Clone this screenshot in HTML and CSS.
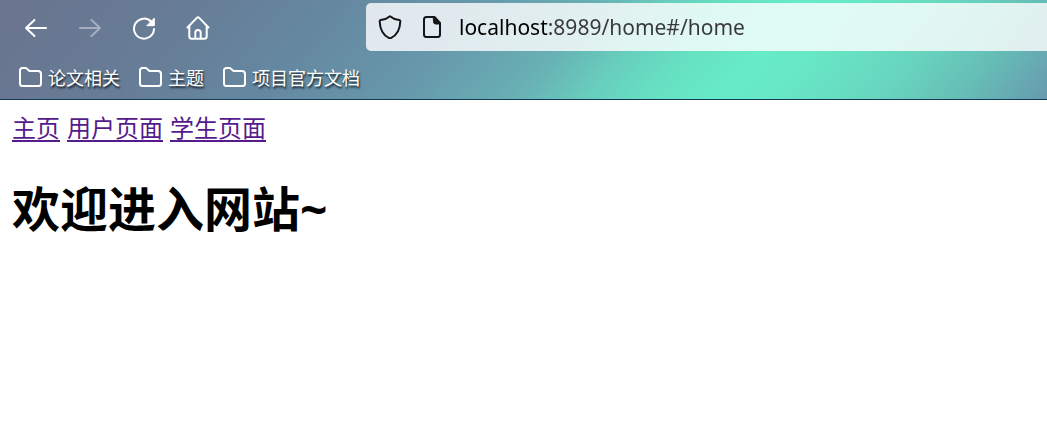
FILE: index.html
```html
<!DOCTYPE html>
<html lang="zh-CN">
<head>
<meta charset="utf-8">
<title>主页</title>
<link rel="stylesheet" href="styles.css">
</head>
<body>
<header class="chrome">
  <div class="toolbar">
    <div class="nav-buttons">
      <button class="nav-button" type="button" aria-label="后退">
        <svg class="icon" viewBox="0 0 24 24"><path d="M22 12H2M10.500 4 2 12l8.500 8"/></svg>
      </button>
      <button class="nav-button" type="button" aria-label="前进" disabled>
        <svg class="icon" viewBox="0 0 24 24"><path d="M2 12H22M13.500 4 22 12l-8.500 8"/></svg>
      </button>
      <button class="nav-button" type="button" aria-label="刷新">
        <svg class="icon" viewBox="0 0 24 24"><path d="M22 13A10 10 0 1 1 19.500 6"/><path class="solid" d="M22.300 2.500v7.200h-7.200z"/></svg>
      </button>
      <button class="nav-button" type="button" aria-label="主页">
        <svg class="icon" viewBox="0 0 24 24"><path d="M1.500 11.500 10.800 1.900q1.200-1.200 2.400 0l9.300 9.600M3.300 10v10.200q0 2.500 2.500 2.500h12.400q2.500 0 2.500-2.500V10M9.300 22.700v-6q0-2.700 2.700-2.700t2.700 2.700v6"/></svg>
      </button>
    </div>
    <div class="address">
      <svg class="icon" viewBox="0 0 24 24" aria-hidden="true"><path d="M12 1.200C9 3.800 5.500 4.700 2.700 5.100Q1.600 5.300 1.700 6.500C2 14.500 5 20 10.800 22.900q1.200.6 2.400 0C19 20 22 14.500 22.300 6.500q.1-1.200-1-1.400C18.500 4.700 15 3.800 12 1.200z"/></svg>
      <svg class="icon" viewBox="0 0 24 24" aria-hidden="true"><path d="M14.500 2H6.500Q4 2 4 4.500v15Q4 22 6.500 22h11q2.500 0 2.500-2.500V8z"/><path class="solid" d="M13.500 2 20.500 9h-5q-2 0-2-2z"/></svg>
      <input class="url" type="text" aria-label="地址" value="localhost:8989/home#/home" spellcheck="false">
    </div>
  </div>
  <nav class="bookmarks" aria-label="书签">
    <button class="bookmark" type="button"><svg class="icon" viewBox="0 0 24 24"><path d="M2 18.500v-13Q2 3 4.500 3H8l3.500 3H20q3 0 3 3v9.500q0 2.500-2.500 2.500h-16Q2 21 2 18.500z"/></svg>论文相关</button>
    <button class="bookmark" type="button"><svg class="icon" viewBox="0 0 24 24"><path d="M2 18.500v-13Q2 3 4.500 3H8l3.500 3H20q3 0 3 3v9.500q0 2.500-2.500 2.500h-16Q2 21 2 18.500z"/></svg>主题</button>
    <button class="bookmark" type="button"><svg class="icon" viewBox="0 0 24 24"><path d="M2 18.500v-13Q2 3 4.500 3H8l3.500 3H20q3 0 3 3v9.500q0 2.500-2.500 2.500h-16Q2 21 2 18.500z"/></svg>项目官方文档</button>
  </nav>
</header>
<main class="page">
  <nav class="links">
    <a class="link" href="#/home">主页</a>
    <a class="link" href="#/user">用户页面</a>
    <a class="link" href="#/student">学生页面</a>
  </nav>
  <h1 class="title">欢迎进入网站~</h1>
</main>
</body>
</html>
```
FILE: styles.css
```css
* {
  box-sizing: border-box;
}

body {
  margin: 0;
  background: #fff;
  font-family: "Noto Sans", "Noto Sans CJK SC", sans-serif;
}

button {
  padding: 0;
  border: 0;
  background: none;
  color: inherit;
  font: inherit;
}

.chrome {
  border-bottom: 1px solid #123c55;
  background: linear-gradient(130deg, #6a748e 0%, #677d97 18%, #6588a1 30%, #6797ab 42%, #68b1b4 53%, #68cdbd 59%, #66e1c2 65%, #66ebc8 71%, #67e7c5 76%, #68d5bf 85%, #66beb6 92%, #679aaf 100%);
  color: #fff;
}

.toolbar {
  display: flex;
  padding-top: 3px;
}

.nav-buttons {
  display: flex;
  flex: none;
  width: 366px;
  padding-left: 9px;
}

.nav-button {
  display: flex;
  align-items: center;
  justify-content: center;
  width: 54px;
  height: 50px;
}

.nav-button:disabled {
  opacity: 0.4;
}

.icon {
  flex: none;
  width: 24px;
  height: 24px;
  fill: none;
  stroke: currentColor;
  stroke-width: 2;
  stroke-linecap: round;
  stroke-linejoin: round;
}

.solid {
  fill: currentColor;
  stroke-width: 1;
}

.address {
  display: flex;
  flex: 1;
  align-items: center;
  gap: 18px;
  height: 48px;
  padding-left: 12px;
  border-radius: 5px 0 0 5px;
  background: rgba(255, 255, 255, 0.8);
  color: #15141a;
}

.url {
  flex: 1;
  min-width: 0;
  padding: 0;
  margin-left: -3px;
  border: 0;
  outline: 0;
  background: linear-gradient(90deg, #000 88px, #38383d 88px);
  background-clip: text;
  -webkit-background-clip: text;
  color: transparent;
  font-family: "Noto Sans", sans-serif;
  font-size: 21px;
  line-height: 32px;
}

.bookmarks {
  display: flex;
  gap: 18px;
  padding: 10px 18px 8px;
}

.bookmark {
  display: flex;
  align-items: center;
  gap: 6px;
  font-family: "Noto Sans CJK SC", sans-serif;
  font-size: 18px;
  line-height: 28px;
  text-shadow: 1px 2px 2px rgba(0, 0, 0, 0.75);
}

.page {
  padding: 11px 12px;
}

.links {
  display: flex;
  gap: 7px;
  font-family: "Noto Sans CJK SC", sans-serif;
  font-size: 24px;
  line-height: 32px;
}

.link {
  color: #551a8b;
  text-decoration-thickness: 2px;
  text-underline-offset: 3px;
}

.title {
  margin: 34px 0;
  font-size: 48px;
  font-weight: 700;
  line-height: 64px;
}
```
